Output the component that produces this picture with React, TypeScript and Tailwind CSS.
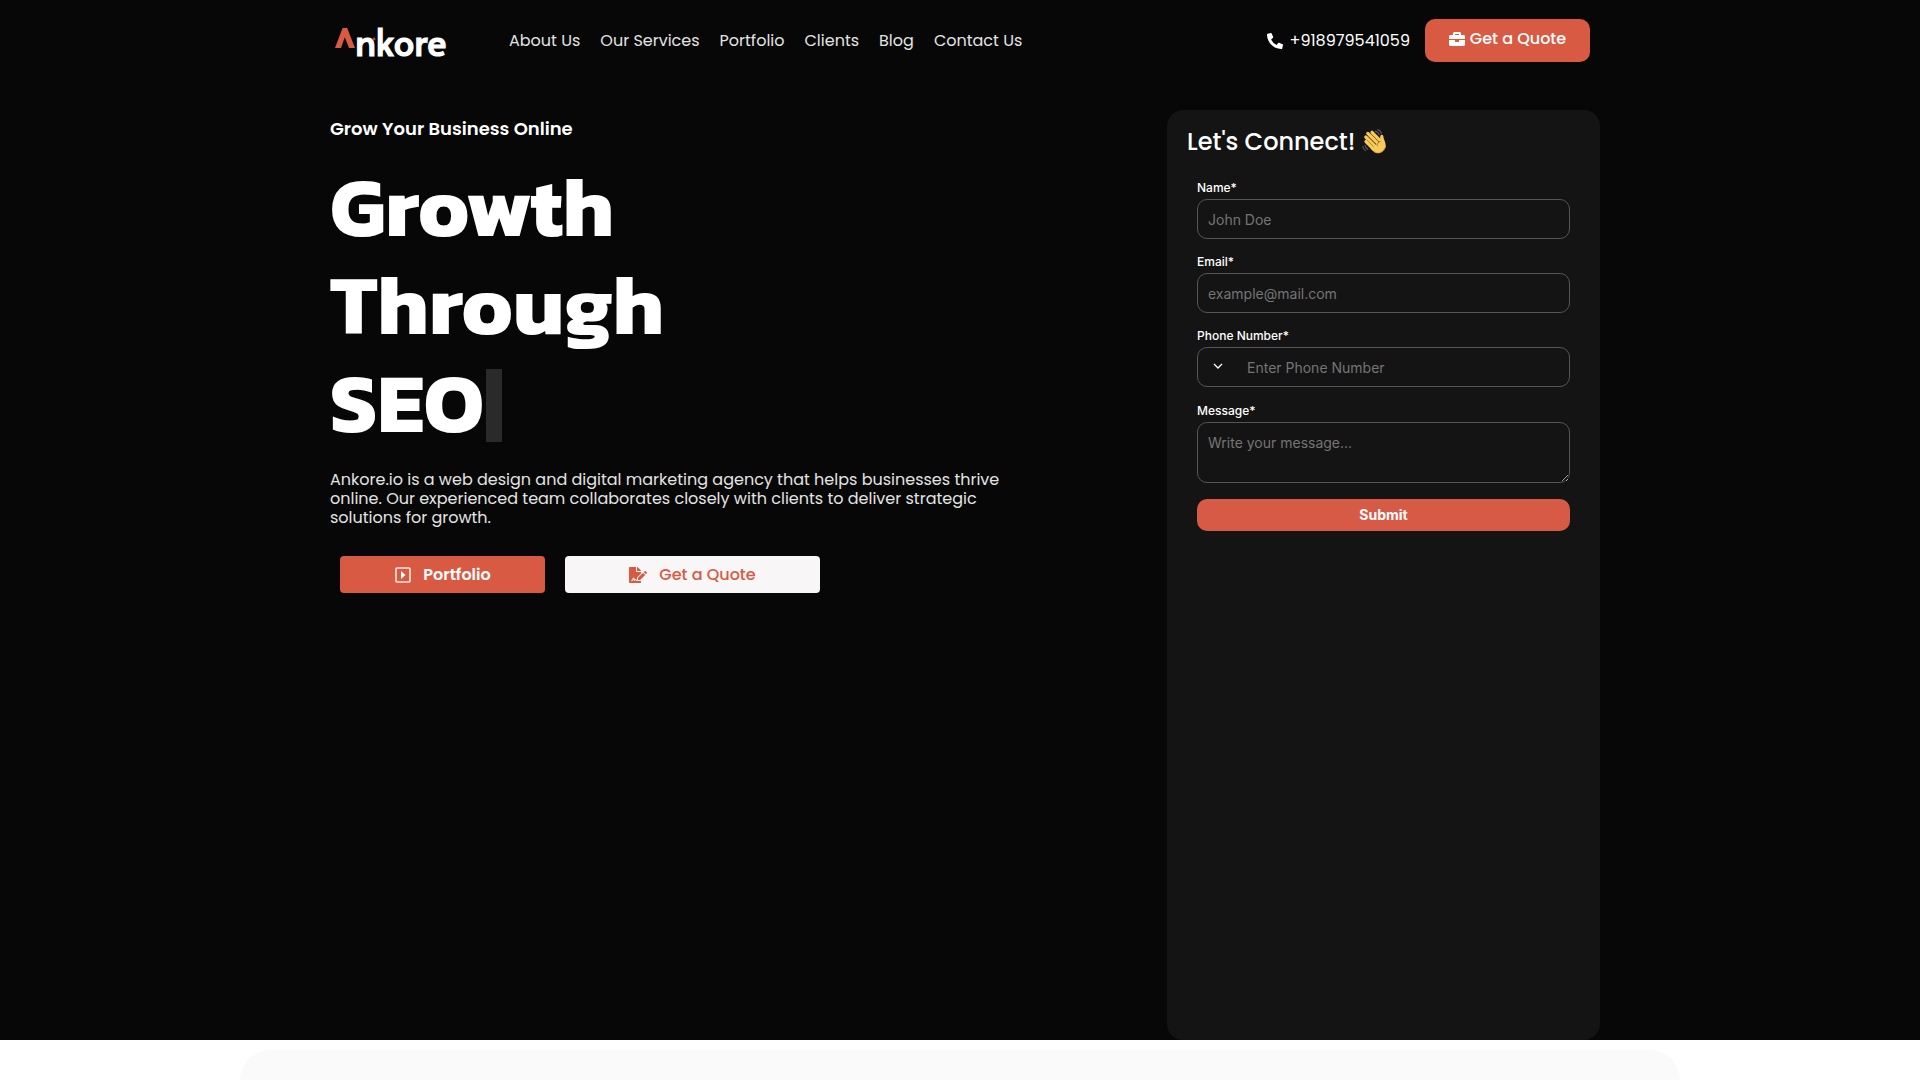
import React from "react";
import { FaBriefcase, FaFileSignature, FaPhoneAlt } from "react-icons/fa";

const links = ["About Us", "Our Services", "Portfolio", "Clients", "Blog", "Contact Us"];

const labelClass = "block text-xs leading-4 font-medium text-white";
const fieldClass =
  "mt-[3px] block w-full rounded-[10px] border border-[#555] bg-transparent px-[10px] text-sm text-white placeholder:text-[#757575]";

function Logo() {
  return (
    <a href="#home" aria-label="Ankore" className="flex w-[112px] items-start text-white">
      <svg width="20" height="20" viewBox="0 0 20 20" className="mt-1 shrink-0" aria-hidden="true">
        <path d="M7.6 0h4.6L20 20h-6L9.8 9.2 6 20H0z" fill="#d95a43" />
      </svg>
      <span className="relative font-['Alata','Lato',sans-serif] text-[37px] leading-[34px] font-bold">
        nkore
        <svg width="4" height="4" viewBox="0 0 4 4" className="absolute top-[13px] left-[17px]" aria-hidden="true">
          <circle cx="2" cy="2" r="1.5" fill="#c43f31" />
        </svg>
      </span>
    </a>
  );
}

function Wave() {
  return (
    <svg width="25" height="25" viewBox="0 0 25 25" aria-label="Waving hand" role="img">
      <g fill="none" stroke="#5b5f63" strokeWidth="1.1" strokeLinecap="round">
        <path d="M13.2 2.2c2 .3 3.6 1.7 4 3.6M15.5.8c2 .4 3.4 1.8 3.8 3.6M3 16.2c.2 1.8 1.2 3.2 2.8 4M.8 17.5c.3 1.9 1.3 3.2 2.9 4" />
      </g>
      <g fill="none" stroke="#f6c95c" strokeWidth="3.2" strokeLinecap="round">
        <path d="M4 12.5l7 7M3.8 8l9 9M5.8 4.4l10 10M10 3.3l8.5 8.5" />
      </g>
      <path d="M18.3 12.6c.3-2.2-.6-3.9.1-5.8.5-1.3 2.5-1.3 2.9.1.3 1.3.3 2.5 1.1 4.3 1.8 4 1.9 7.4-.9 10.3-3.3 3.4-7.3 3.4-10.5.5L8.5 19.5z" fill="#f6c95c" />
      <path d="M5.2 11.3l6 6M6.4 7.5l6.8 6.8M9.3 5.3l6.4 6.4M18.2 12.4c-2.2.8-3.2 2.2-2.9 4.3" fill="none" stroke="#a8741d" strokeWidth=".8" strokeLinecap="round" />
      <path d="M12 22.5c3 2.2 6.5 1.7 9.3-1.2 1.5-1.5 2.2-3.2 2.2-5" fill="none" stroke="#e59f2c" strokeWidth="1" />
    </svg>
  );
}

function Header() {
  return (
    <header className="mx-auto flex h-[81px] w-full max-w-[1300px] items-center justify-between pr-5 pl-[25px]">
      <div className="flex items-center gap-[62px]">
        <Logo />
        <nav className="flex gap-5 text-base text-[#e3e3e3]">
          {links.map((l) => (
            <a key={l} href="#nav" className="whitespace-nowrap">
              {l}
            </a>
          ))}
        </nav>
      </div>
      <div className="flex items-center gap-[15px] text-base text-white">
        <a href="tel:+918979541059" className="flex items-center gap-[6px]">
          <FaPhoneAlt size={16} />
          +918979541059
        </a>
        <button className="flex h-[43px] w-[165px] items-center justify-center gap-[5px] rounded-[10px] bg-[#d95a43] pb-1 font-medium whitespace-nowrap">
          <FaBriefcase size={16} />
          Get a Quote
        </button>
      </div>
    </header>
  );
}

function ContactCard() {
  return (
    <section className="w-[433px] shrink-0 rounded-2xl bg-[#141414] px-5 pt-[19px] pb-5">
      <h2 className="flex items-center gap-[7px] text-2xl leading-[25px] font-medium text-white">
        Let&apos;s Connect! <Wave />
      </h2>
      <form className="flex flex-col gap-[15px] px-[10px] pt-[26px] font-['Inter',sans-serif]">
        <div>
          <label htmlFor="name" className={labelClass}>Name*</label>
          <input id="name" placeholder="John Doe" className={`${fieldClass} h-10`} />
        </div>
        <div>
          <label htmlFor="email" className={labelClass}>Email*</label>
          <input id="email" type="email" placeholder="example@mail.com" className={`${fieldClass} h-10`} />
        </div>
        <div className="pb-px">
          <label htmlFor="phone" className={labelClass}>Phone Number*</label>
          <div className="mt-[3px] flex h-10 items-center rounded-[10px] border border-[#555]">
            <div className="relative h-full w-[49px]">
              <select aria-label="Country code" className="h-full w-full appearance-none bg-transparent text-transparent">
                <option value="">+91</option>
              </select>
              <svg width="10" height="6" viewBox="0 0 10 6" className="pointer-events-none absolute top-[15px] left-[15px]" aria-hidden="true">
                <path d="M1 1l4 4 4-4" fill="none" stroke="#fff" strokeWidth="1.3" />
              </svg>
            </div>
            <input id="phone" type="tel" placeholder="Enter Phone Number" className="h-full min-w-0 flex-1 bg-transparent text-sm text-white placeholder:text-[#757575]" />
          </div>
        </div>
        <div className="pb-px">
          <label htmlFor="message" className={labelClass}>Message*</label>
          <textarea id="message" placeholder="Write your message..." className={`${fieldClass} h-[61px] resize py-[10px] leading-5`} />
        </div>
        <button type="button" className="h-8 rounded-[10px] bg-[#d65a45] text-sm font-bold text-white">
          Submit
        </button>
      </form>
    </section>
  );
}

export default function App() {
  return (
    <div className="min-h-screen overflow-x-hidden bg-white font-['Poppins','Inter',sans-serif]">
      <div className="flex min-h-[1040px] flex-col bg-[#070707]">
        <Header />
        <main className="mx-auto flex w-full max-w-[1300px] flex-1 px-[10px] pt-[29px]">
          <section className="min-w-0 flex-1 px-[10px] pt-[5px]">
            <p className="text-lg leading-7 font-semibold text-white">Grow Your Business Online</p>
            <h1 className="pt-[14px] font-['Kanit','Open_Sans',sans-serif] text-[85px] leading-[98px] font-bold text-white">
              Growth
              <br />
              Through
              <br />
              <span className="flex items-center gap-[2px]">
                SEO
                <span className="mt-1.5 h-[73px] w-4 bg-[#2a2a2a]" />
              </span>
            </h1>
            <p className="max-w-[700px] pt-[19px] text-base leading-[19px] text-[#e3e3e3]">
              Ankore.io is a web design and digital marketing agency that helps businesses thrive
              <br />
              online. Our experienced team collaborates closely with clients to deliver strategic
              <br />
              solutions for growth.
            </p>
            <div className="flex gap-5 px-[10px] pt-[29px]">
              <button className="flex h-[37px] w-[205px] items-center justify-center gap-3 rounded bg-[#d95a43] pl-px text-base font-semibold text-white">
                <svg width="16" height="16" viewBox="0 0 16 16" aria-hidden="true">
                  <rect x="1" y="1" width="14" height="14" rx="1" fill="none" stroke="#fbe9e5" strokeWidth="1.6" />
                  <path d="M6 4v8l4.5-4z" fill="#fff" />
                </svg>
                Portfolio
              </button>
              <button className="flex h-[37px] w-[255px] items-center justify-center gap-3 rounded bg-[#f8f6f7] text-base font-medium text-[#d95a43]">
                <FaFileSignature size={18} />
                Get a Quote
              </button>
            </div>
          </section>
          <ContactCard />
        </main>
      </div>
      <div className="mx-auto mt-[10px] h-[30px] w-full max-w-[1440px] rounded-t-[30px] bg-[#fafafa]" />
    </div>
  );
}
